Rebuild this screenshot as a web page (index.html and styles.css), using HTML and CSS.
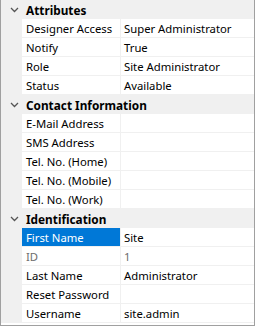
FILE: index.html
```html
<!DOCTYPE html>
<html lang="en">
	<head>
		<meta charset="UTF-8" />
		<title>Properties</title>
		<link rel="stylesheet" href="styles.css">
	</head>
	<body>
		<div class="grid">
			<div class="category">
				<span class="chevron"><svg width="9" height="6" viewBox="0 0 9 6"><path d="M1 1l3.5 3.5L8 1" fill="none" stroke="#555" stroke-width="1.3"/></svg></span>
				<span class="cat-name">Attributes</span>
			</div>
			<div class="row"><span class="gutter"></span><span class="name">Designer Access</span><span class="value">Super Administrator</span></div>
			<div class="row"><span class="gutter"></span><span class="name">Notify</span><span class="value">True</span></div>
			<div class="row"><span class="gutter"></span><span class="name">Role</span><span class="value">Site Administrator</span></div>
			<div class="row"><span class="gutter"></span><span class="name">Status</span><span class="value">Available</span></div>
			<div class="category">
				<span class="chevron"><svg width="9" height="6" viewBox="0 0 9 6"><path d="M1 1l3.5 3.5L8 1" fill="none" stroke="#555" stroke-width="1.3"/></svg></span>
				<span class="cat-name">Contact Information</span>
			</div>
			<div class="row"><span class="gutter"></span><span class="name">E-Mail Address</span><span class="value"></span></div>
			<div class="row"><span class="gutter"></span><span class="name">SMS Address</span><span class="value"></span></div>
			<div class="row"><span class="gutter"></span><span class="name">Tel. No. (Home)</span><span class="value"></span></div>
			<div class="row"><span class="gutter"></span><span class="name">Tel. No. (Mobile)</span><span class="value"></span></div>
			<div class="row"><span class="gutter"></span><span class="name">Tel. No. (Work)</span><span class="value"></span></div>
			<div class="category">
				<span class="chevron"><svg width="9" height="6" viewBox="0 0 9 6"><path d="M1 1l3.5 3.5L8 1" fill="none" stroke="#555" stroke-width="1.3"/></svg></span>
				<span class="cat-name">Identification</span>
			</div>
			<div class="row"><span class="gutter"></span><span class="name selected">First Name</span><span class="value">Site</span></div>
			<div class="row disabled"><span class="gutter"></span><span class="name">ID</span><span class="value">1</span></div>
			<div class="row"><span class="gutter"></span><span class="name">Last Name</span><span class="value">Administrator</span></div>
			<div class="row"><span class="gutter"></span><span class="name">Reset Password</span><span class="value"></span></div>
			<div class="row"><span class="gutter"></span><span class="name">Username</span><span class="value">site.admin</span></div>
		</div>
	</body>
</html>
```
FILE: styles.css
```css
body {
	margin: 0;
	background: #f0f0f0;
	font-family: "Noto Sans", "Open Sans", sans-serif;
	font-size: 11.3px;
	color: #000;
}
.grid {
	width: 255px;
	height: 326px;
	box-sizing: border-box;
	border: 1px solid #a0a0a0;
	border-top: none;
	background: #fff;
	overflow: hidden;
}
.category {
	display: flex;
	align-items: center;
	height: 19px;
	background: #f0f0f0;
}
.chevron {
	width: 25px;
	display: flex;
	justify-content: center;
	padding-left: 1px;
	box-sizing: border-box;
}
.cat-name {
	font-weight: bold;
	font-size: 11.8px;
}
.row {
	display: grid;
	grid-template-columns: 21px 99px 1fr;
	height: 19px;
}
.gutter {
	background: #f0f0f0;
}
.name,
.value {
	display: flex;
	align-items: center;
	padding-left: 4px;
	padding-top: 1px;
	box-sizing: border-box;
	border-bottom: 1px solid #f0f0f0;
	white-space: nowrap;
	overflow: hidden;
}
.name {
	border-right: 1px solid #f0f0f0;
}
.value {
	padding-left: 3px;
}
.selected {
	background: #0078d7;
	color: #fff;
}
.disabled {
	color: #6d6d6d;
}
```
